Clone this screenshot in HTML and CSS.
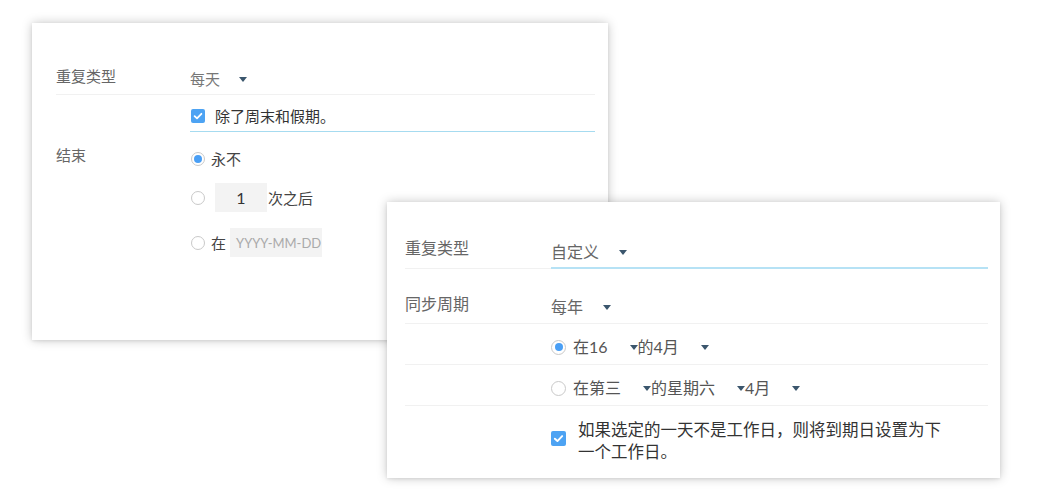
FILE: index.html
```html
<!DOCTYPE html>
<html lang="zh-CN">
<head>
<meta charset="utf-8">
<title>重复设置</title>
<link rel="stylesheet" href="styles.css">
</head>
<body>
<div class="stage">
  <section class="card card-a">
    <div class="row row-type">
      <div class="label">重复类型</div>
      <div class="value"><span class="select">每天<i class="caret"></i></span></div>
    </div>
    <div class="row row-check">
      <div class="label"></div>
      <div class="value check-line">
        <span class="checkbox"><svg viewBox="0 0 14 14" width="14" height="14"><path d="M3.6 7.2 L6 9.4 L10.4 4.8" fill="none" stroke="#fff" stroke-width="1.8" stroke-linecap="round" stroke-linejoin="round"/></svg></span>
        <span class="check-text">除了周末和假期。</span>
      </div>
    </div>
    <div class="row row-end">
      <div class="label end-label">结束</div>
      <div class="options">
        <div class="opt opt-never"><span class="radio on"></span><span class="opt-text">永不</span></div>
        <div class="opt opt-count"><span class="radio"></span><span class="box num">1</span><span class="opt-text">次之后</span></div>
        <div class="opt opt-date"><span class="radio"></span><span class="opt-text">在</span><span class="box date">YYYY-MM-DD</span></div>
      </div>
    </div>
  </section>

  <section class="card card-b">
    <div class="row b-type">
      <div class="label">重复类型</div>
      <div class="value"><span class="select">自定义<i class="caret"></i></span></div>
    </div>
    <div class="row b-sync">
      <div class="label">同步周期</div>
      <div class="value"><span class="select">每年<i class="caret"></i></span></div>
    </div>
    <div class="row b-opt">
      <div class="label"></div>
      <div class="value inline">
        <span class="radio on"></span><span class="txt">在</span><span class="select">16<i class="caret"></i></span><span class="txt">的</span><span class="select">4月<i class="caret"></i></span>
      </div>
    </div>
    <div class="row b-opt">
      <div class="label"></div>
      <div class="value inline">
        <span class="radio"></span><span class="txt">在</span><span class="select">第三<i class="caret"></i></span><span class="txt">的</span><span class="select">星期六<i class="caret"></i></span><span class="select">4月<i class="caret"></i></span>
      </div>
    </div>
    <div class="row b-check">
      <div class="label"></div>
      <div class="value check-line">
        <span class="checkbox"><svg viewBox="0 0 14 14" width="15" height="15"><path d="M3.6 7.2 L6 9.4 L10.4 4.8" fill="none" stroke="#fff" stroke-width="1.8" stroke-linecap="round" stroke-linejoin="round"/></svg></span>
        <span class="check-text">如果选定的一天不是工作日，则将到期日设置为下一个工作日。</span>
      </div>
    </div>
  </section>
</div>
</body>
</html>
```

FILE: styles.css
```css
* { box-sizing: border-box; }

html, body {
  margin: 0;
  padding: 0;
  background: #ffffff;
}

body {
  font-family: "Lato", "Noto Sans CJK SC", sans-serif;
  color: #555;
}

.stage {
  position: relative;
  width: 1037px;
  height: 504px;
}

.card {
  position: absolute;
  background: #fff;
  box-shadow: 0 0 10px rgba(0, 0, 0, 0.22), 0 1px 3px rgba(0, 0, 0, 0.08);
}

/* ---------- card A ---------- */
.card-a {
  left: 32px;
  top: 23px;
  width: 576px;
  height: 317px;
  padding: 35px 13px 0 24px;
  font-size: 15px;
}

.card-a .row {
  display: grid;
  grid-template-columns: 134px 1fr;
}

.label {
  color: #666;
  line-height: 22px;
}

.row-type {
  height: 37px;
  border-bottom: 1px solid #f1f1f1;
}
.row-type .label { padding-top: 7px; }
.row-type .value { padding-top: 10px; line-height: 22px; color: #777; }

.select {
  display: inline-flex;
  align-items: center;
  white-space: nowrap;
}
.caret {
  display: inline-block;
  width: 0;
  height: 0;
  border-left: 4px solid transparent;
  border-right: 4px solid transparent;
  border-top: 5px solid #3b566d;
  margin-left: 20px;
}
.card-a .caret { margin-left: 19px; }

.check-line {
  display: flex;
  align-items: center;
}
.checkbox {
  display: inline-flex;
  flex: none;
  border-radius: 2px;
  background: #4da3f3;
  overflow: hidden;
}
.check-text { color: #333; }

.row-check .value {
  padding: 10px 0 4px 1px;
  line-height: 22px;
  border-bottom: 1px solid #a6dbf0;
  height: 37px;
}
.row-check .check-text { margin-left: 10px; }

.end-label { margin-top: 12px; }

.options {
  display: flex;
  flex-direction: column;
  align-items: flex-start;
}
.opt {
  display: flex;
  align-items: center;
  line-height: 22px;
}
.opt-text { color: #444; }
.opt-never { margin-top: 16px; }
.opt-count { margin-top: 13px; }
.opt-date { margin-top: 16px; }

.radio {
  display: inline-block;
  flex: none;
  width: 14px;
  height: 14px;
  border: 1px solid #c9c9c9;
  border-radius: 50%;
  position: relative;
  background: #fff;
}
.card-a .radio { margin-left: 1px; }
.radio.on::after {
  content: "";
  position: absolute;
  left: 2px;
  top: 2px;
  width: 8px;
  height: 8px;
  border-radius: 50%;
  background: #4a9ff5;
}

.opt-never .opt-text { margin-left: 6px; }

.box {
  display: inline-flex;
  align-items: center;
  height: 29px;
  background: #f3f3f3;
}
.num {
  width: 52px;
  justify-content: center;
  margin-left: 10px;
  margin-right: 1px;
  font-size: 16px;
  color: #333;
}
.date {
  width: 92px;
  margin-left: 4px;
  padding-left: 6px;
  font-size: 13px;
  color: #aaa;
}
.opt-date .opt-text { margin-left: 6px; }

/* ---------- card B ---------- */
.card-b {
  left: 387px;
  top: 202px;
  width: 613px;
  height: 276px;
  padding: 28px 12px 0 18px;
  font-size: 16px;
}

.card-b .row {
  display: grid;
  grid-template-columns: 146px 1fr;
}

.b-type { height: 39px; }
.b-type .label {
  padding-top: 7px;
  border-bottom: 1px solid #f1f1f1;
}
.b-type .value {
  padding-top: 11px;
  line-height: 22px;
  color: #666;
  border-bottom: 2px solid #b6e2f5;
}

.b-sync {
  height: 55px;
  border-bottom: 1px solid #f1f1f1;
}
.b-sync .label { padding-top: 24px; }
.b-sync .value { padding-top: 27px; line-height: 22px; color: #666; }

.b-opt {
  height: 41px;
  border-bottom: 1px solid #f1f1f1;
}
.b-opt .value {
  padding-top: 12px;
  line-height: 22px;
}
.inline {
  display: flex;
  align-items: center;
  height: 34px;
  color: #555;
}
.card-b .radio {
  width: 15px;
  height: 15px;
}
.card-b .radio.on::after { left: 2.5px; top: 2.5px; }
.inline .radio { margin-right: 7px; }
.inline .caret { margin-left: 22px; }

.b-check .value {
  padding-top: 13px;
  line-height: 22px;
  align-items: flex-start;
}
.b-check .checkbox { margin-top: 12px; }
.b-check .check-text {
  width: 372px;
  margin-left: 12px;
  text-spacing-trim: space-all;
  font-size: 16.5px;
}
```
